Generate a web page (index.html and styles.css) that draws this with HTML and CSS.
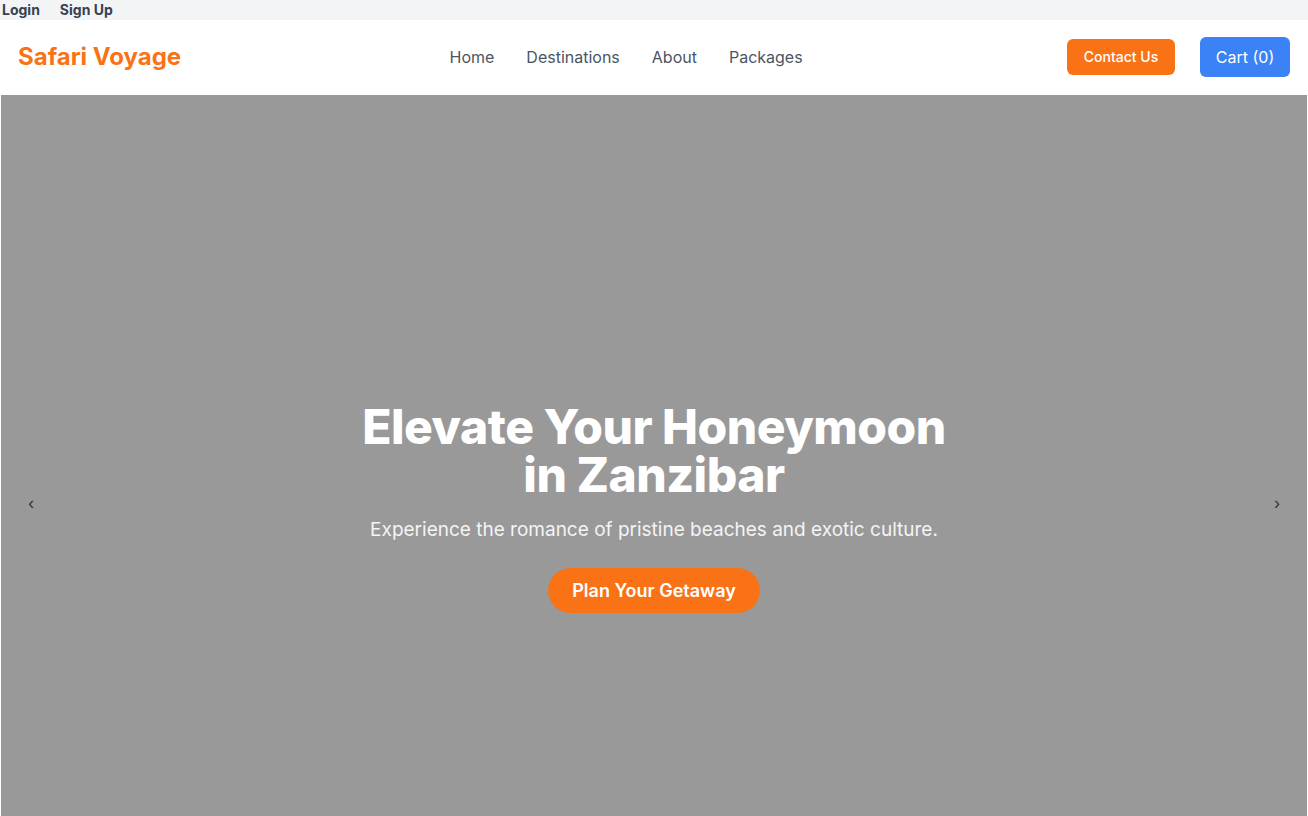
FILE: index.html
```html
<!DOCTYPE html>
<html lang="en">
<head>
<meta charset="utf-8">
<title>Safari Voyage</title>
<link rel="stylesheet" href="styles.css">
</head>
<body>
<div class="topbar">
  <a class="top-link" href="#">Login</a>
  <a class="top-link" href="#">Sign Up</a>
</div>
<header class="nav">
  <div class="logo">Safari Voyage</div>
  <nav class="links">
    <a href="#">Home</a>
    <a href="#">Destinations</a>
    <a href="#">About</a>
    <a href="#">Packages</a>
  </nav>
  <div class="actions">
    <button class="btn-contact">Contact Us</button>
    <button class="btn-cart">Cart (0)</button>
  </div>
</header>
<section class="hero">
  <button class="arrow arrow-left">‹</button>
  <div class="hero-content">
    <h1 class="hero-title">Elevate Your Honeymoon<br>in Zanzibar</h1>
    <p class="hero-sub">Experience the romance of pristine beaches and exotic culture.</p>
    <button class="hero-btn">Plan Your Getaway</button>
  </div>
  <button class="arrow arrow-right">›</button>
</section>
</body>
</html>
```

FILE: styles.css
```css
* { box-sizing: border-box; }
html, body { margin: 0; padding: 0; overflow: hidden; }
body { font-family: Inter, "Liberation Sans", sans-serif; background: #fff; }

.topbar {
  height: 20px;
  background: #f3f4f6;
  display: flex;
  align-items: center;
  gap: 20px;
  padding-left: 2px;
}
.top-link {
  font-size: 14px;
  font-weight: 700;
  color: #374151;
  text-decoration: none;
  line-height: 20px;
}

.nav {
  height: 75px;
  display: flex;
  align-items: center;
  justify-content: space-between;
  padding: 0 18px 2px;
  background: #fff;
}
.logo {
  font-size: 24px;
  font-weight: 700;
  color: #f97316;
  letter-spacing: 0;
}
.links { display: flex; gap: 32px; margin-left: 4px; }
.links a {
  font-size: 16px;
  color: #4b5563;
  text-decoration: none;
}
.actions { display: flex; align-items: center; gap: 25px; }
.btn-contact {
  height: 36px;
  width: 108px;
  border: none;
  border-radius: 6px;
  background: #f97316;
  color: #fff;
  font-family: inherit;
  font-size: 14px;
  font-weight: 500;
}
.btn-cart {
  height: 40px;
  width: 90px;
  border: none;
  border-radius: 6px;
  background: #3b82f6;
  color: #fff;
  font-family: inherit;
  font-size: 16px;
}

.hero {
  height: 816px;
  background: #999999;
  margin-left: 1px;
  margin-right: 1px;
  display: flex;
  align-items: center;
  justify-content: space-between;
  padding: 0 24px;
}
.hero-content {
  display: flex;
  flex-direction: column;
  align-items: center;
  text-align: center;
  padding-top: 10px;
}
.hero-title {
  margin: 0;
  font-size: 48px;
  line-height: 48px;
  font-weight: 800;
  color: #fff;
  letter-spacing: -0.5px;
  position: relative;
  top: -1px;
}
.hero-sub {
  margin: 16px 0 0;
  font-size: 19px;
  line-height: 28px;
  color: #f3f4f6;
}
.hero-btn {
  margin-top: 24px;
  height: 45px;
  padding: 0 24px;
  border: none;
  border-radius: 999px;
  background: #f97316;
  color: #fff;
  font-family: inherit;
  font-size: 18px;
  font-weight: 600;
}
.arrow {
  background: none;
  border: none;
  color: #333;
  font-size: 16px;
  font-family: inherit;
  padding: 0;
  width: 12px;
}
```
